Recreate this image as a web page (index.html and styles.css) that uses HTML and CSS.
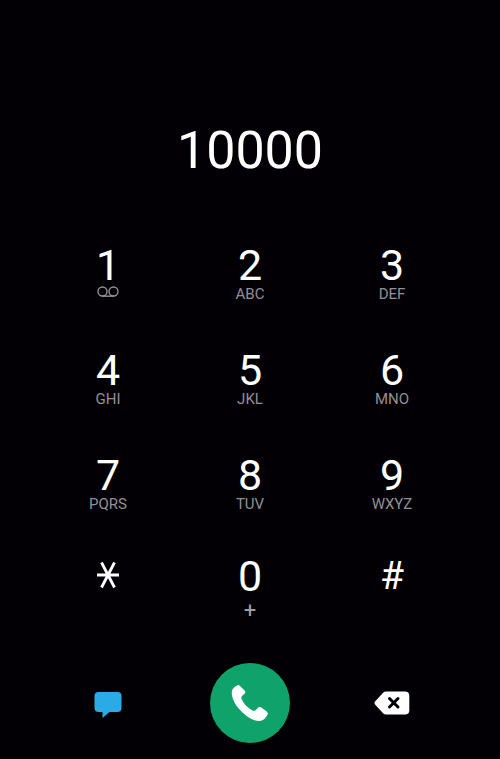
FILE: index.html
```html
<!DOCTYPE html>
<html lang="en">
<head>
  <meta charset="UTF-8" />
  <meta name="viewport" content="width=device-width, initial-scale=1.0"/>
  <title>Phone</title>
  <link rel="stylesheet" href="styles.css">
</head>
<body>
  <main class="dialer">

    <!-- Dialed number -->
    <output class="display">10000</output>

    <!-- Keypad -->
    <div class="keypad">
      <button class="key">
        <span class="digit">1</span>
        <span class="letters">
          <svg class="voicemail" width="22" height="12" viewBox="0 0 22 12" aria-label="Voicemail">
            <circle cx="5.500" cy="5.500" r="4.500"/>
            <circle cx="16.500" cy="5.500" r="4.500"/>
            <path d="M5 10.2H17"/>
          </svg>
        </span>
      </button>
      <button class="key"><span class="digit">2</span><span class="letters">ABC</span></button>
      <button class="key"><span class="digit">3</span><span class="letters">DEF</span></button>

      <button class="key"><span class="digit">4</span><span class="letters">GHI</span></button>
      <button class="key"><span class="digit">5</span><span class="letters">JKL</span></button>
      <button class="key"><span class="digit">6</span><span class="letters">MNO</span></button>

      <button class="key"><span class="digit">7</span><span class="letters">PQRS</span></button>
      <button class="key"><span class="digit">8</span><span class="letters">TUV</span></button>
      <button class="key"><span class="digit">9</span><span class="letters">WXYZ</span></button>

      <button class="key" aria-label="Star">
        <svg class="star" width="22" height="38" viewBox="0 0 22 38">
          <path d="M0 19H22M4.500 6.500L17.500 31.500M17.500 6.500L4.500 31.500"/>
        </svg>
      </button>
      <button class="key"><span class="digit">0</span><span class="plus">+</span></button>
      <button class="key"><span class="digit hash">#</span></button>
    </div>

    <!-- Actions -->
    <div class="actions">
      <button class="action" aria-label="Send message">
        <svg width="28" height="32" viewBox="0 0 28 32">
          <path fill="#2babe6" d="M4.500 5H23.500Q27.500 5 27.500 9V21Q27.500 25 23.500 25H15.500L8.500 31V25H4.500Q.500 25 .500 21V9Q.500 5 4.500 5Z"/>
        </svg>
      </button>
      <button class="action call" aria-label="Call">
        <svg width="38" height="38" viewBox="0 0 38 38">
          <path fill="#fff" d="M6 1.500Q7.500 .4 8.800 1.700L13.800 6.800Q15 8.300 13.800 9.600L11.200 11.700Q9.800 13 10.600 15C12.500 19.500 16.500 23.800 21 26.200Q23.300 27.300 24.800 26.200L27 23.600Q28.600 22.300 30.300 23.400L36 27.700Q37.300 29 36.500 30.800L34 34.500Q32 36.700 28.500 37C22 37.300 13.500 31.500 8 24.800C3.500 19.500 .5 13 .8 8.500Q1 5.200 3.300 3.300Z"/>
        </svg>
      </button>
      <button class="action" aria-label="Delete">
        <svg width="36" height="24" viewBox="0 0 36 24">
          <path fill="#fff" d="M12 .500H31Q35.300.500 35.300 4.800V19.200Q35.300 23.500 31 23.500H12Q10.500 23.500 9.300 22.400L1.300 13.800Q-.3 12 1.300 10.200L9.300 1.600Q10.500.500 12 .500Z"/>
          <path stroke="#000" stroke-width="3" stroke-linecap="round" d="M15.500 7.500L24 16M24 7.500L15.500 16"/>
        </svg>
      </button>
    </div>

  </main>
</body>
</html>
```
FILE: styles.css
```css
/* General Styles */
body {
  margin: 0;
  background: #020004;
  color: #fff;
  font-family: Roboto, "Liberation Sans", sans-serif;
}
button {
  padding: 0;
  border: none;
  background: none;
  color: inherit;
  font: inherit;
  cursor: pointer;
}
svg {
  display: block;
}

.dialer {
  padding: 121px 37px 16px;
}

/* Display */
.display {
  display: block;
  font-size: 52px;
  line-height: 60px;
  text-align: center;
}

/* Keypad */
.keypad {
  display: grid;
  grid-template-columns: repeat(3, 1fr);
  grid-template-rows: 105px 105px 101px auto;
  margin-top: 64px;
}
.key {
  display: flex;
  flex-direction: column;
  align-items: center;
  justify-content: flex-start;
}
.digit {
  font-size: 43px;
  line-height: 40px;
}
.hash {
  font-size: 39px;
}
.letters {
  margin-top: 1px;
  color: #929094;
  font-size: 15px;
  line-height: 16px;
}
.plus {
  color: #a09ea2;
  font-size: 22px;
  line-height: 30px;
}
.voicemail {
  fill: none;
  stroke: #929094;
  stroke-width: 1.4;
}
.star {
  fill: none;
  stroke: #fff;
  stroke-width: 2.8;
}

/* Actions */
.actions {
  display: grid;
  grid-template-columns: repeat(3, 1fr);
  place-items: center;
  margin-top: 37px;
}
.call {
  display: grid;
  place-items: center;
  width: 80px;
  height: 80px;
  border-radius: 50%;
  background: #0fa36b;
}
```
